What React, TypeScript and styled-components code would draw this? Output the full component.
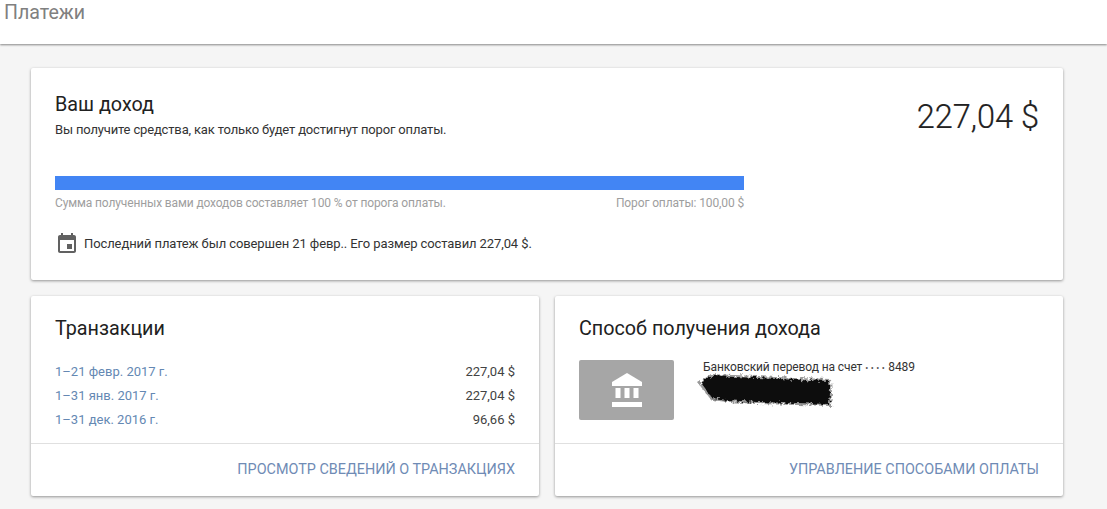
import styled, { createGlobalStyle } from "styled-components";
import { useId } from "react";

const GlobalStyle = createGlobalStyle`
  html, body {
    margin: 0;
    padding: 0;
    height: 509px;
    overflow: hidden;
    background: #f5f5f5;
    font-family: Roboto, "Liberation Sans", sans-serif;
  }
`;

const transactions = [
  { period: "1–21 февр. 2017 г.", amount: "227,04 $" },
  { period: "1–31 янв. 2017 г.", amount: "227,04 $" },
  { period: "1–31 дек. 2016 г.", amount: "96,66 $" },
];

const CalendarIcon = () => (
  <svg width="24" height="24" viewBox="0 0 24 24" fill="#616161">
    <path d="M17 12h-5v5h5v-5zM16 1v2H8V1H6v2H5c-1.11 0-1.99.9-1.99 2L3 19c0 1.1.89 2 2 2h14c1.1 0 2-.9 2-2V5c0-1.1-.9-2-2-2h-1V1h-2zm3 18H5V8h14v11z" />
  </svg>
);

const BankIcon = () => (
  <svg width="30" height="34" viewBox="0 0 30 34" fill="#fff">
    <path d="M15 0 30 9v4H0V9z" />
    <path d="M3.5 15h5v10h-5zM12.5 15h5v10h-5zM21.5 15h5v10h-5z" />
    <path d="M0 29h30v5H0z" />
  </svg>
);

const Scribble = () => {
  const id = useId();
  return (
    <svg width="138" height="38" viewBox="0 0 138 38">
      <defs>
        <filter id={id} x="-5%" y="-20%" width="110%" height="140%">
          <feTurbulence type="fractalNoise" baseFrequency="0.3" numOctaves="3" seed="7" />
          <feDisplacementMap in="SourceGraphic" scale="7" />
        </filter>
      </defs>
      <g filter={`url(#${id})`}>
        <path
          d="M1 11 L14 2 L60 4 L100 6 L134 7 L135 21 L134 34 L100 33 L60 32 L30 30 L14 28 Z"
          fill="#9a9a9a"
        />
        <path
          d="M4 11 L15 4 L60 6 L100 8 L132 9 L133 21 L132 32 L100 31 L60 30 L30 28 L15 26 Z"
          fill="#0c0c0c"
        />
      </g>
    </svg>
  );
};

export default function App() {
  return (
    <>
      <GlobalStyle />
      <Header>
        <PageTitle>Платежи</PageTitle>
      </Header>
      <Content>
        <Card>
          <IncomeBody>
            <IncomeTop>
              <div>
                <CardTitle>Ваш доход</CardTitle>
                <IncomeHint>Вы получите средства, как только будет достигнут порог оплаты.</IncomeHint>
              </div>
              <Balance>227,04 $</Balance>
            </IncomeTop>
            <Progress>
              <ProgressBar />
              <ProgressLabels>
                <span>Сумма полученных вами доходов составляет 100 % от порога оплаты.</span>
                <span>Порог оплаты: 100,00 $</span>
              </ProgressLabels>
            </Progress>
            <LastPayment>
              <CalendarIcon />
              <span>Последний платеж был совершен 21 февр.. Его размер составил 227,04 $.</span>
            </LastPayment>
          </IncomeBody>
        </Card>
        <BottomRow>
          <Card>
            <CardBody>
              <CardTitle>Транзакции</CardTitle>
              <TransactionList>
                {transactions.map((t) => (
                  <TransactionRow key={t.period}>
                    <PeriodLink>{t.period}</PeriodLink>
                    <Amount>{t.amount}</Amount>
                  </TransactionRow>
                ))}
              </TransactionList>
            </CardBody>
            <CardFooter>
              <FooterLink>Просмотр сведений о транзакциях</FooterLink>
            </CardFooter>
          </Card>
          <Card>
            <CardBody>
              <CardTitle>Способ получения дохода</CardTitle>
              <MethodRow>
                <MethodTile>
                  <BankIcon />
                </MethodTile>
                <MethodInfo>
                  <MethodName>
                    Банковский перевод на счет <MaskDots>••••</MaskDots>8489
                  </MethodName>
                  <ScribbleWrap>
                    <Scribble />
                  </ScribbleWrap>
                </MethodInfo>
              </MethodRow>
            </CardBody>
            <CardFooter>
              <FooterLink>Управление способами оплаты</FooterLink>
            </CardFooter>
          </Card>
        </BottomRow>
      </Content>
    </>
  );
}

const Header = styled.header`
  height: 44px;
  box-sizing: border-box;
  background: #fff;
  padding: 1px 4px 0;
  box-shadow: 0 1px 2px rgba(0, 0, 0, 0.45);
`;

const PageTitle = styled.h1`
  margin: 0;
  font-size: 19.6px;
  font-weight: 400;
  line-height: 24px;
  color: #808080;
`;

const Content = styled.main`
  width: 1032px;
  margin-left: 31px;
  padding-top: 24px;
  display: flex;
  flex-direction: column;
  gap: 16px;
`;

const BottomRow = styled.div`
  display: grid;
  grid-template-columns: 508px 508px;
  gap: 16px;
`;

const Card = styled.section`
  background: #fff;
  border-radius: 2px;
  box-shadow: 0 1px 3px rgba(0, 0, 0, 0.4);
  display: flex;
  flex-direction: column;
`;

const IncomeBody = styled.div`
  height: 212px;
  box-sizing: border-box;
  padding: 24px 24px 0;
`;

const IncomeTop = styled.div`
  display: flex;
  justify-content: space-between;
  align-items: flex-start;
`;

const CardTitle = styled.h2`
  margin: 0;
  padding-top: 1px;
  font-size: 19.75px;
  font-weight: 400;
  line-height: 24px;
  color: #212121;
`;

const IncomeHint = styled.p`
  margin: 3px 0 0;
  font-size: 13px;
  letter-spacing: -0.16px;
  line-height: 20px;
  color: #333;
`;

const Balance = styled.div`
  font-size: 32.5px;
  font-weight: 300;
  line-height: 50px;
  color: #212121;
  -webkit-text-stroke: 0.2px #212121;
`;

const Progress = styled.div`
  width: 689px;
  margin-top: 34px;
`;

const ProgressBar = styled.div`
  height: 14px;
  background: #4285f4;
`;

const ProgressLabels = styled.div`
  display: flex;
  justify-content: space-between;
  margin-top: 4px;
  font-size: 12px;
  letter-spacing: -0.13px;
  line-height: 18px;
  color: #9e9e9e;
`;

const LastPayment = styled.div`
  display: flex;
  align-items: center;
  gap: 5px;
  margin-top: 20px;
  font-size: 13px;
  letter-spacing: -0.1px;
  line-height: 24px;
  color: #333;
`;

const CardBody = styled.div`
  height: 147px;
  box-sizing: border-box;
  padding: 20px 24px 0;
`;

const TransactionList = styled.div`
  margin-top: 19px;
`;

const TransactionRow = styled.div`
  display: flex;
  justify-content: space-between;
  font-size: 13px;
  line-height: 24px;
`;

const PeriodLink = styled.a`
  color: #6488b3;
`;

const Amount = styled.span`
  color: #424242;
`;

const CardFooter = styled.div`
  height: 53px;
  box-sizing: border-box;
  border-top: 1px solid #e0e0e0;
  padding: 0 24px 2px 0;
  display: flex;
  justify-content: flex-end;
  align-items: center;
`;

const FooterLink = styled.a`
  font-size: 14.4px;
  text-transform: uppercase;
  color: #6f8bb5;
`;

const MethodRow = styled.div`
  display: flex;
  gap: 29px;
  margin-top: 19px;
`;

const MethodTile = styled.div`
  width: 95px;
  height: 60px;
  border-radius: 2px;
  background: #a6a6a6;
  display: flex;
  align-items: center;
  justify-content: center;
`;

const MethodInfo = styled.div`
  position: relative;
`;

const MethodName = styled.div`
  font-size: 12px;
  letter-spacing: -0.1px;
  line-height: 14px;
  color: #333;
`;

const MaskDots = styled.span`
  font-size: 9px;
  letter-spacing: 2.5px;
  margin-right: 1px;
  color: #555;
`;

const ScribbleWrap = styled.div`
  position: absolute;
  top: 12px;
  left: -6px;
`;
